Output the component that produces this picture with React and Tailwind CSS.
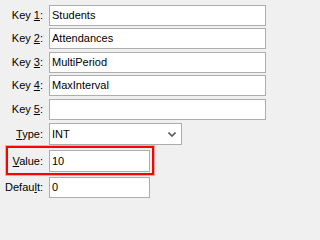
import React from "react";

const keys = [
  { n: "1", value: "Students", gap: "mt-0" },
  { n: "2", value: "Attendances", gap: "mt-[2px]" },
  { n: "3", value: "MultiPeriod", gap: "mt-[3px]" },
  { n: "4", value: "MaxInterval", gap: "mt-[2px]" },
  { n: "5", value: "", gap: "mt-[3px]" },
];

const Label = ({ children }) => (
  <div className="w-[44px] shrink-0 text-right pr-[1px]">{children}</div>
);

const inputCls =
  "h-[21px] border border-[#adadad] bg-white pl-[2px] flex items-center";

const App = () => {
  return (
    <div
      className="w-full min-w-[271px] min-h-screen bg-[#f0f0f0] pt-[5px] text-[11px] text-black leading-none"
      style={{ fontFamily: '"Liberation Sans", Arial, sans-serif' }}
    >
      {keys.map((k) => (
        <div key={k.n} className={`flex items-center ${k.gap}`}>
          <Label>
            Key <u className="underline-offset-1">{k.n}</u>:
          </Label>
          <div className={`${inputCls} ml-[5px] w-[217px]`}>{k.value}</div>
        </div>
      ))}

      <div className="flex items-center mt-[3px]">
        <Label>
          <u className="underline-offset-1">T</u>ype:
        </Label>
        <div className="ml-[5px] w-[133px] h-[22px] border border-[#adadad] bg-white pl-[2px] pr-[5px] flex items-center justify-between">
          <span>INT</span>
          <svg width="8" height="5" viewBox="0 0 8 5">
            <path d="M0.5 0.5 L4 4 L7.5 0.5" fill="none" stroke="#5a5a5a" strokeWidth="1.6" />
          </svg>
        </div>
      </div>

      <div className="relative flex items-center mt-[5px]">
        <div className="absolute left-[6px] top-[-4px] w-[148px] h-[29px] border-2 border-[#ff0000] shadow-[0_0_0_1px_rgba(255,120,120,0.6)] pointer-events-none" />
        <Label>
          <u className="underline-offset-1">V</u>alue:
        </Label>
        <div className={`${inputCls} ml-[5px] w-[101px] h-[22px]`}>10</div>
      </div>

      <div className="flex items-center mt-[5px]">
        <Label>
          Defau<u className="underline-offset-1">l</u>t:
        </Label>
        <div className={`${inputCls} ml-[5px] w-[101px]`}>0</div>
      </div>
    </div>
  );
};

export default App;
